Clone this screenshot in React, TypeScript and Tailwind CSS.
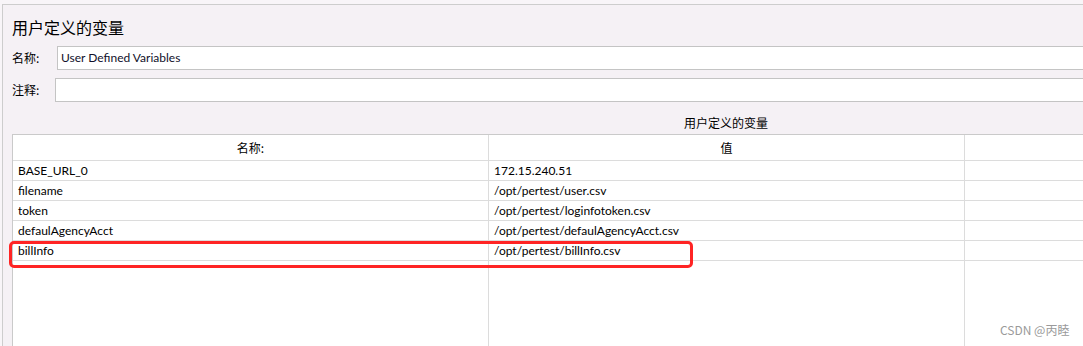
import React from "react";

const rows: [string, string][] = [
  ["BASE_URL_0", "172.15.240.51"],
  ["filename", "/opt/pertest/user.csv"],
  ["token", "/opt/pertest/loginfotoken.csv"],
  ["defaulAgencyAcct", "/opt/pertest/defaulAgencyAcct.csv"],
  ["billInfo", "/opt/pertest/billInfo.csv"],
];

const cjk = "font-['Noto_Sans_CJK_SC',sans-serif]";

const App: React.FC = () => {
  return (
    <div className="relative h-[346px] w-[1083px] overflow-hidden bg-[#f8f5f8] font-['Lato','Noto_Sans_CJK_SC',sans-serif] text-[12px] text-black">
      <div className="ml-[2px] mt-[4px] flex h-[342px] w-[1500px] flex-col border-l border-t border-[#cdcdcd] bg-[#f5f1f5] pl-[9px]">
        <div className={`mt-[10px] h-[24px] text-[16px] leading-[24px] ${cjk}`}>用户定义的变量</div>

        <div className="mt-[7px] flex h-[24px] items-center">
          <span className={`w-[45px] ${cjk}`}>名称:</span>
          <div className="h-[24px] flex-1 border border-[#c4c4c4] bg-white pl-[3px] leading-[22px] text-[#10102a]">
            User Defined Variables
          </div>
        </div>

        <div className="mt-[8px] flex h-[24px] items-center">
          <span className={`w-[43px] ${cjk}`}>注释:</span>
          <div className="h-[24px] flex-1 border border-[#c4c4c4] bg-white" />
        </div>

        <div className={`h-[32px] w-[1428px] pt-[13px] text-center leading-[16px] ${cjk}`}>用户定义的变量</div>

        <div className="flex w-[1429px] flex-1 flex-col border-l border-t border-[#cacaca] bg-white">
          <div className={`grid h-[26px] grid-cols-[476px_476px_476px] ${cjk}`}>
            <div className="flex items-center justify-center border-b border-r border-[#dcdcdc]">名称:</div>
            <div className="flex items-center justify-center border-b border-r border-[#dcdcdc]">值</div>
            <div className="border-b border-r border-[#dcdcdc]" />
          </div>
          {rows.map(([name, value]) => (
            <div key={name} className="grid h-[20px] grid-cols-[476px_476px_476px]">
              <div className="flex items-center border-b border-r border-[#dcdcdc] pl-[5px]">{name}</div>
              <div className="flex items-center border-b border-r border-[#dcdcdc] pl-[5px]">{value}</div>
              <div className="border-b border-r border-[#dcdcdc]" />
            </div>
          ))}
          <div className="grid flex-1 grid-cols-[476px_476px_476px]">
            <div className="border-r border-[#dcdcdc]" />
            <div className="border-r border-[#dcdcdc]" />
            <div className="border-r border-[#dcdcdc]" />
          </div>
        </div>
      </div>

      <div className="absolute left-[9px] top-[241px] h-[27px] w-[684px] rounded-[5px] border-[3px] border-[#ff2424]" />

      <div className={`absolute left-[1000px] top-[322px] text-[12px] leading-[16px] text-[#9a9a9a] ${cjk}`}>CSDN @丙睦</div>
    </div>
  );
};

export default App;
